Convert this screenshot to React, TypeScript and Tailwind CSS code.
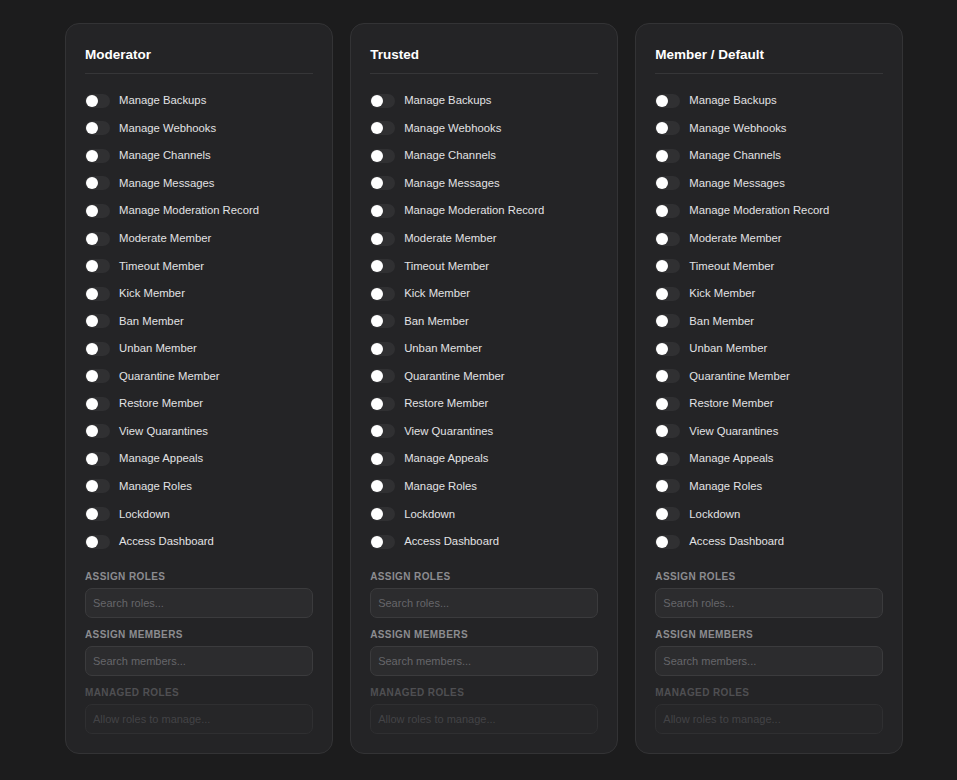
import React from "react";

const perms = [
  "Manage Backups",
  "Manage Webhooks",
  "Manage Channels",
  "Manage Messages",
  "Manage Moderation Record",
  "Moderate Member",
  "Timeout Member",
  "Kick Member",
  "Ban Member",
  "Unban Member",
  "Quarantine Member",
  "Restore Member",
  "View Quarantines",
  "Manage Appeals",
  "Manage Roles",
  "Lockdown",
  "Access Dashboard",
];

function Toggle() {
  return (
    <div className="w-[25px] h-[14px] rounded-full bg-[#303032] flex items-center pl-[1px]">
      <div className="w-[12px] h-[12px] rounded-full bg-white" />
    </div>
  );
}

function Field({ label, placeholder, disabled }: { label: string; placeholder: string; disabled?: boolean }) {
  return (
    <div className="flex flex-col">
      <div
        className={
          "text-[10px] leading-[12px] font-bold tracking-[0.4px] uppercase " +
          (disabled ? "text-[#4f4f52]" : "text-[#8c8c90]")
        }
      >
        {label}
      </div>
      <div
        className={
          "mt-[5px] h-[30px] rounded-[7px] border flex items-center px-[7px] text-[11px] " +
          (disabled
            ? "bg-[#262628] border-[#2f2f31] text-[#434346]"
            : "bg-[#2c2c2e] border-[#3b3b3d] text-[#66666a]")
        }
      >
        {placeholder}
      </div>
    </div>
  );
}

function Card({ title }: { title: string }) {
  return (
    <div className="rounded-[14px] border border-[#333335] bg-[#242426] px-[19px] pt-[21px] pb-[19px] flex flex-col">
      <div className="text-[13.5px] leading-[20px] font-bold text-white pb-[8px] border-b border-[#363638]">{title}</div>
      <div className="flex flex-col mt-[13px]">
        {perms.map((p) => (
          <div key={p} className="h-[27.56px] flex items-center gap-[9px]">
            <Toggle />
            <span className="text-[11.3px] text-[#e2e2e4]">{p}</span>
          </div>
        ))}
      </div>
      <div className="mt-[16px] flex flex-col gap-[11px]">
        <Field label="Assign Roles" placeholder="Search roles..." />
        <Field label="Assign Members" placeholder="Search members..." />
        <Field label="Managed Roles" placeholder="Allow roles to manage..." disabled />
      </div>
    </div>
  );
}

export default function App() {
  return (
    <div
      className="min-h-[780px] w-full bg-[#1c1c1d] pt-[23px]"
      style={{ fontFamily: '"Liberation Sans", Arial, sans-serif' }}
    >
      <div className="ml-[65px] w-[838px] grid grid-cols-3 gap-[17.5px]">
        <Card title="Moderator" />
        <Card title="Trusted" />
        <Card title="Member / Default" />
      </div>
    </div>
  );
}
